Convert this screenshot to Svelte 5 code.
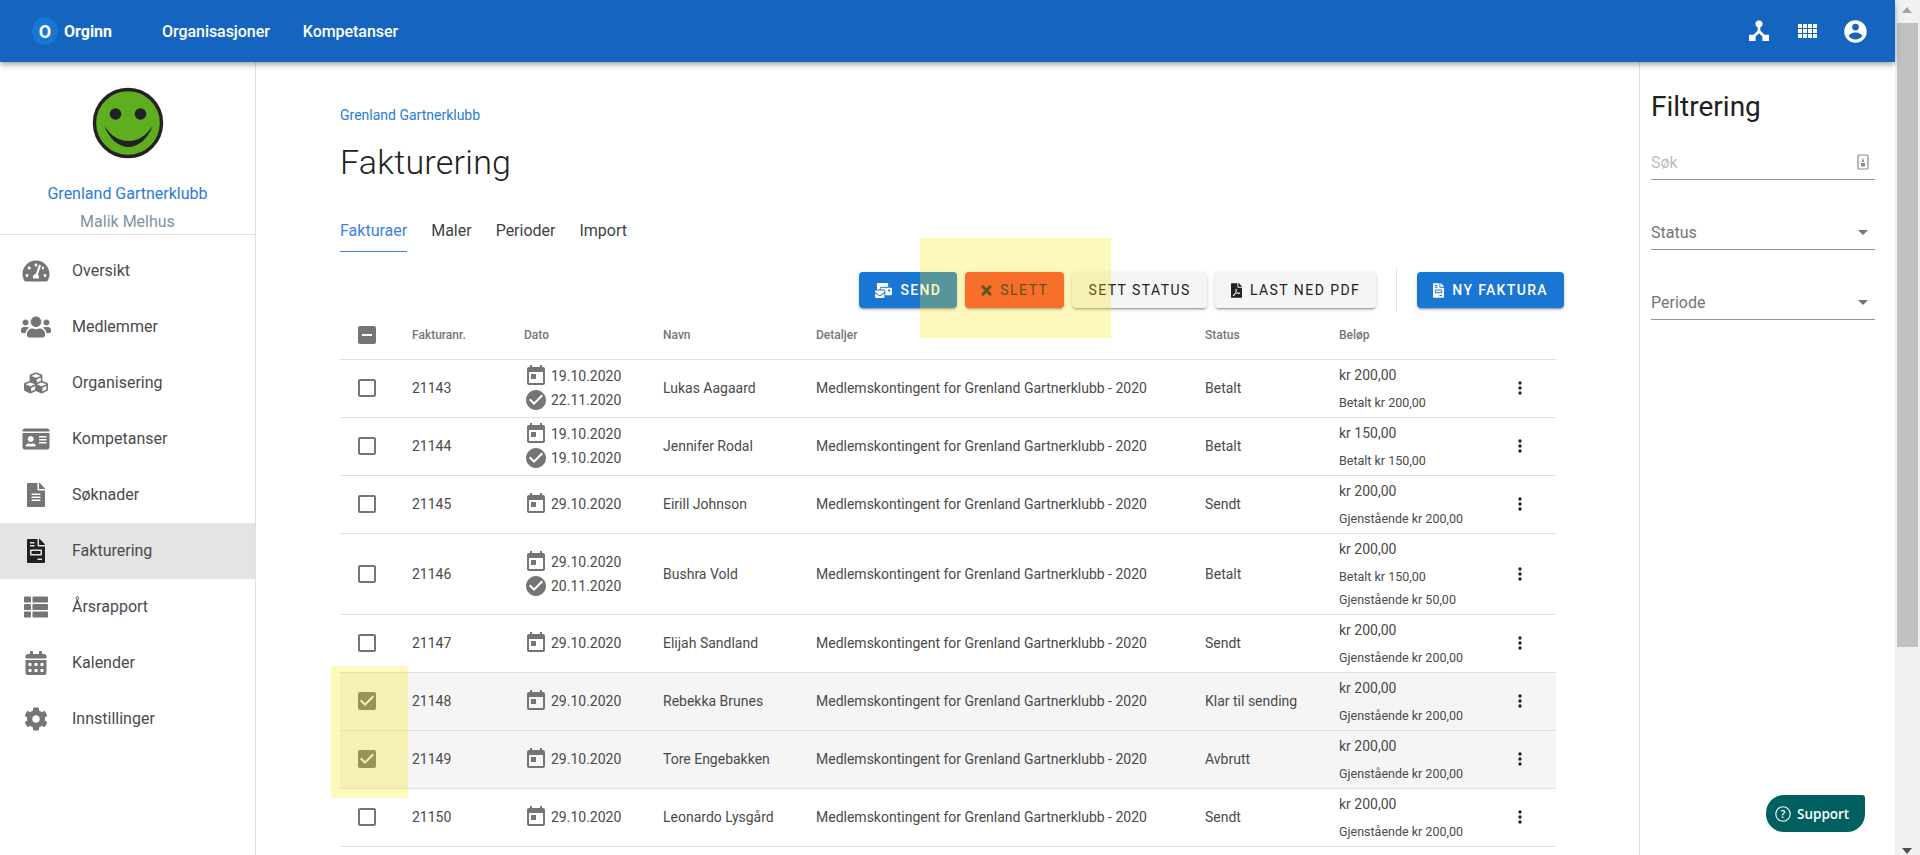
<script>
  const P = {
    gauge: ['0 0 576 512', 'M288 32C128.94 32 0 160.94 0 320c0 52.8 14.25 102.26 39.06 144.8 5.61 9.62 16.3 15.2 27.44 15.2h443c11.14 0 21.83-5.58 27.44-15.2C561.75 422.26 576 372.8 576 320c0-159.06-128.94-288-288-288zm0 64c14.71 0 26.58 10.13 30.32 23.65-1.11 2.26-2.64 4.23-3.45 6.67l-9.22 27.67c-5.13 3.49-10.97 6.01-17.64 6.01-17.67 0-32-14.33-32-32S270.33 96 288 96zM96 384c-17.67 0-32-14.33-32-32s14.33-32 32-32 32 14.33 32 32-14.33 32-32 32zm48-160c-17.67 0-32-14.33-32-32s14.33-32 32-32 32 14.33 32 32-14.33 32-32 32zm246.77-72.41l-61.33 184C343.13 347.33 352 364.54 352 384c0 11.72-3.38 22.55-8.88 32H232.88c-5.5-9.45-8.88-20.28-8.88-32 0-33.94 26.5-61.43 59.9-63.59l61.34-184.01c4.17-12.56 17.73-19.45 30.36-15.17 12.57 4.19 19.35 17.77 15.17 30.36zm14.66 57.2l15.52-46.55c3.47-1.29 7.13-2.23 11.05-2.23 17.67 0 32 14.33 32 32s-14.33 32-32 32c-11.38-.01-20.89-6.28-26.57-15.22zM480 384c-17.67 0-32-14.33-32-32s14.33-32 32-32 32 14.33 32 32-14.33 32-32 32z'],
    users: ['0 0 640 512', 'M96 224c35.3 0 64-28.7 64-64s-28.7-64-64-64-64 28.7-64 64 28.7 64 64 64zm448 0c35.3 0 64-28.7 64-64s-28.7-64-64-64-64 28.7-64 64 28.7 64 64 64zm32 32h-64c-17.6 0-33.5 7.1-45.1 18.6 40.3 22.1 68.9 62 75.1 109.4h66c17.7 0 32-14.3 32-32v-32c0-35.3-28.7-64-64-64zm-256 0c61.9 0 112-50.1 112-112S381.9 32 320 32 208 82.1 208 144s50.1 112 112 112zm76.8 32h-8.3c-20.8 10-43.9 16-68.5 16s-47.6-6-68.5-16h-8.3C179.6 288 128 339.6 128 403.2V432c0 26.5 21.5 48 48 48h288c26.5 0 48-21.5 48-48v-28.8c0-63.6-51.6-115.2-115.2-115.2zm-223.7-13.4C161.5 263.1 145.6 256 128 256H64c-35.3 0-64 28.7-64 64v32c0 17.7 14.3 32 32 32h65.9c6.3-47.4 34.9-87.3 75.2-109.4z'],
    cubes: ['0 0 512 512', 'M488.6 250.2L392 214V105.5c0-15-9.3-28.4-23.4-33.7l-100-37.5c-8.1-3.1-17.1-3.1-25.3 0l-100 37.5c-14.1 5.3-23.4 18.7-23.4 33.7V214l-96.6 36.2C9.3 255.5 0 268.9 0 283.9V394c0 13.6 7.7 26.1 19.9 32.2l100 50c10.1 5.1 22.1 5.1 32.2 0l103.9-52 103.9 52c10.1 5.1 22.1 5.1 32.2 0l100-50c12.2-6.1 19.9-18.6 19.9-32.2V283.9c0-15-9.3-28.4-23.4-33.7zM358 214.8l-85 31.9v-68.2l85-37v73.3zM154 104.1l102-38.2 102 38.2v.6l-102 41.4-102-41.4v-.6zm84 291.1l-85 42.5v-79.1l85-38.8v75.4zm0-112l-102 41.4-102-41.4v-.6l102-38.2 102 38.2v.6zm240 112l-85 42.5v-79.1l85-38.8v75.4zm0-112l-102 41.4-102-41.4v-.6l102-38.2 102 38.2v.6z'],
    idcard: ['0 0 576 512', 'M528 32H48C21.5 32 0 53.5 0 80v16h576V80c0-26.5-21.5-48-48-48zM0 432c0 26.5 21.5 48 48 48h480c26.5 0 48-21.5 48-48V128H0v304zm352-232c0-4.4 3.6-8 8-8h144c4.4 0 8 3.6 8 8v16c0 4.4-3.6 8-8 8H360c-4.4 0-8-3.6-8-8v-16zm0 64c0-4.4 3.6-8 8-8h144c4.4 0 8 3.6 8 8v16c0 4.4-3.6 8-8 8H360c-4.4 0-8-3.6-8-8v-16zm0 64c0-4.4 3.6-8 8-8h144c4.4 0 8 3.6 8 8v16c0 4.4-3.6 8-8 8H360c-4.4 0-8-3.6-8-8v-16zM176 192c35.3 0 64 28.7 64 64s-28.7 64-64 64-64-28.7-64-64 28.7-64 64-64zM67.1 396.2C75.5 370.5 99.6 352 128 352h8.2c12.3 5.1 25.7 8 39.8 8s27.6-2.9 39.8-8h8.2c28.4 0 52.5 18.5 60.9 44.2 3.2 9.9-5.2 19.8-15.6 19.8H82.7c-10.4 0-18.8-10-15.6-19.8z'],
    filealt: ['0 0 384 512', 'M224 136V0H24C10.7 0 0 10.7 0 24v464c0 13.3 10.7 24 24 24h336c13.3 0 24-10.7 24-24V160H248c-13.2 0-24-10.8-24-24zm64 236c0 6.6-5.4 12-12 12H108c-6.6 0-12-5.4-12-12v-8c0-6.6 5.4-12 12-12h168c6.6 0 12 5.4 12 12v8zm0-64c0 6.6-5.4 12-12 12H108c-6.6 0-12-5.4-12-12v-8c0-6.6 5.4-12 12-12h168c6.6 0 12 5.4 12 12v8zm0-72v8c0 6.6-5.4 12-12 12H108c-6.6 0-12-5.4-12-12v-8c0-6.6 5.4-12 12-12h168c6.6 0 12 5.4 12 12zm96-114.1v6.1H256V0h6.1c6.4 0 12.5 2.5 17 7l97.9 98c4.5 4.5 7 10.6 7 16.9z'],
    invoice: ['0 0 384 512', 'M288 256H96v64h192v-64zm89-151L279.1 7c-4.5-4.5-10.6-7-17-7H256v128h128v-6.1c0-6.3-2.5-12.4-7-16.9zm-153 31V0H24C10.7 0 0 10.7 0 24v464c0 13.3 10.7 24 24 24h336c13.3 0 24-10.7 24-24V160H248c-13.2 0-24-10.8-24-24zM64 72c0-4.42 3.58-8 8-8h80c4.42 0 8 3.58 8 8v16c0 4.42-3.58 8-8 8H72c-4.42 0-8-3.58-8-8V72zm0 64c0-4.42 3.58-8 8-8h80c4.42 0 8 3.58 8 8v16c0 4.42-3.58 8-8 8H72c-4.42 0-8-3.58-8-8v-16zm256 304c0 4.42-3.58 8-8 8h-80c-4.42 0-8-3.58-8-8v-16c0-4.42 3.58-8 8-8h80c4.42 0 8 3.58 8 8v16zm0-200v96c0 8.84-7.16 16-16 16H80c-8.84 0-16-7.16-16-16v-96c0-8.84 7.16-16 16-16h224c8.84 0 16 7.16 16 16z'],
    thlist: ['0 0 512 512', 'M149.333 216v80c0 13.255-10.745 24-24 24H24c-13.255 0-24-10.745-24-24v-80c0-13.255 10.745-24 24-24h101.333c13.255 0 24 10.745 24 24zM0 376v80c0 13.255 10.745 24 24 24h101.333c13.255 0 24-10.745 24-24v-80c0-13.255-10.745-24-24-24H24c-13.255 0-24 10.745-24 24zM125.333 32H24C10.745 32 0 42.745 0 56v80c0 13.255 10.745 24 24 24h101.333c13.255 0 24-10.745 24-24V56c0-13.255-10.745-24-24-24zm80 448H488c13.255 0 24-10.745 24-24v-80c0-13.255-10.745-24-24-24H205.333c-13.255 0-24 10.745-24 24v80c0 13.255 10.745 24 24 24zm-24-424v80c0 13.255 10.745 24 24 24H488c13.255 0 24-10.745 24-24V56c0-13.255-10.745-24-24-24H205.333c-13.255 0-24 10.745-24 24zm24 264H488c13.255 0 24-10.745 24-24v-80c0-13.255-10.745-24-24-24H205.333c-13.255 0-24 10.745-24 24v80c0 13.255 10.745 24 24 24z'],
    calalt: ['0 0 448 512', 'M0 464c0 26.5 21.5 48 48 48h352c26.5 0 48-21.5 48-48V192H0v272zm320-196c0-6.6 5.4-12 12-12h40c6.6 0 12 5.4 12 12v40c0 6.6-5.4 12-12 12h-40c-6.6 0-12-5.4-12-12v-40zm0 128c0-6.6 5.4-12 12-12h40c6.6 0 12 5.4 12 12v40c0 6.6-5.4 12-12 12h-40c-6.6 0-12-5.4-12-12v-40zM192 268c0-6.6 5.4-12 12-12h40c6.6 0 12 5.4 12 12v40c0 6.6-5.4 12-12 12h-40c-6.6 0-12-5.4-12-12v-40zm0 128c0-6.6 5.4-12 12-12h40c6.6 0 12 5.4 12 12v40c0 6.6-5.4 12-12 12h-40c-6.6 0-12-5.4-12-12v-40zM64 268c0-6.6 5.4-12 12-12h40c6.6 0 12 5.4 12 12v40c0 6.6-5.4 12-12 12H76c-6.6 0-12-5.4-12-12v-40zm0 128c0-6.6 5.4-12 12-12h40c6.6 0 12 5.4 12 12v40c0 6.6-5.4 12-12 12H76c-6.6 0-12-5.4-12-12v-40zM400 64h-48V16c0-8.8-7.2-16-16-16h-32c-8.8 0-16 7.2-16 16v48H160V16c0-8.8-7.2-16-16-16h-32c-8.8 0-16 7.2-16 16v48H48C21.5 64 0 85.5 0 112v48h448v-48c0-26.5-21.5-48-48-48z'],
    cog: ['0 0 512 512', 'M487.4 315.7l-42.6-24.6c4.3-23.2 4.3-47 0-70.2l42.6-24.6c4.9-2.8 7.1-8.6 5.5-14-11.1-35.6-30-67.8-54.7-94.6-3.8-4.1-10-5.1-14.8-2.3L380.8 110c-17.9-15.4-38.5-27.3-60.8-35.1V25.8c0-5.6-3.9-10.5-9.4-11.7-36.7-8.2-74.3-7.8-109.2 0-5.5 1.2-9.4 6.1-9.4 11.7V75c-22.2 7.9-42.8 19.8-60.8 35.1L88.7 85.5c-4.9-2.8-11-1.9-14.8 2.3-24.7 26.7-43.6 58.9-54.7 94.6-1.7 5.4.6 11.2 5.5 14L67.3 221c-4.3 23.2-4.3 47 0 70.2l-42.6 24.6c-4.9 2.8-7.1 8.6-5.5 14 11.1 35.6 30 67.8 54.7 94.6 3.8 4.1 10 5.1 14.8 2.3l42.6-24.6c17.9 15.4 38.5 27.3 60.8 35.1v49.2c0 5.6 3.9 10.5 9.4 11.7 36.7 8.2 74.3 7.8 109.2 0 5.5-1.2 9.4-6.1 9.4-11.7v-49.2c22.2-7.9 42.8-19.8 60.8-35.1l42.6 24.6c4.9 2.8 11 1.9 14.8-2.3 24.7-26.7 43.6-58.9 54.7-94.6 1.5-5.5-.7-11.3-5.6-14.1zM256 336c-44.1 0-80-35.9-80-80s35.9-80 80-80 80 35.9 80 80-35.9 80-80 80z'],
    mail: ['0 0 576 512', 'M160 448c-25.6 0-51.2-22.4-64-32-64-44.8-83.2-60.8-96-70.4V480c0 17.67 14.33 32 32 32h256c17.67 0 32-14.33 32-32V345.6c-12.8 9.6-32 25.6-96 70.4-12.8 9.6-38.4 32-64 32zm128-192H32c-17.67 0-32 14.33-32 32v16c25.6 19.2 22.4 19.2 115.2 86.4 9.6 6.4 28.8 25.6 44.8 25.6s35.2-19.2 44.8-22.4c92.8-67.2 89.6-67.2 115.2-86.4V288c0-17.67-14.33-32-32-32zm256-96H224c-17.67 0-32 14.33-32 32v32h96c33.21 0 60.59 25.42 63.71 57.82l.29-.22V416h192c17.67 0 32-14.33 32-32V192c0-17.67-14.33-32-32-32zm-32 128h-64v-64h64v64zm-352-96c0-35.29 28.71-64 64-64h224V32c0-17.67-14.33-32-32-32H96C78.33 0 64 14.33 64 32v192h96v-32z'],
    pdf: ['0 0 384 512', 'M181.9 256.1c-5-16-4.9-46.9-2-46.9 8.4 0 7.6 36.9 2 46.9zm-1.7 47.2c-7.7 20.2-17.3 43.3-28.4 62.7 18.3-7 39-17.2 62.9-21.9-12.7-9.6-24.9-23.4-34.5-40.8zM86.1 428.1c0 .8 13.2-5.4 34.9-40.2-6.7 6.3-29.1 24.5-34.9 40.2zM248 160h136v328c0 13.3-10.7 24-24 24H24c-13.3 0-24-10.7-24-24V24C0 10.7 10.7 0 24 0h200v136c0 13.2 10.8 24 24 24zm-8 171.8c-20-12.2-33.3-29-42.7-53.8 4.5-18.5 11.6-46.6 6.2-64.2-4.7-29.4-42.4-26.5-47.8-6.8-5 18.3-.4 44.1 8.1 77-11.6 27.6-28.7 64.6-40.8 85.8-.1 0-.1.1-.2.1-27.1 13.9-73.6 44.5-54.5 68 5.6 6.9 16 10 21.5 10 17.9 0 35.7-18 61.1-61.8 25.8-8.5 54.1-19.1 79-23.2 21.7 11.8 47.1 19.5 64 19.5 29.2 0 31.2-32 19.7-43.4-13.9-13.6-54.3-9.7-73.6-7.2zM377 105L279 7c-4.5-4.5-10.6-7-17-7h-6v128h128v-6.1c0-6.3-2.5-12.4-7-16.9zm-74.1 255.3c4.1-2.7-2.5-11.9-42.8-9 37.1 15.8 42.8 9 42.8 9z'],
    times: ['0 0 352 512', 'M242.72 256l100.07-100.07c12.28-12.28 12.28-32.19 0-44.48l-22.24-22.24c-12.28-12.28-32.19-12.28-44.48 0L176 189.28 75.93 89.21c-12.28-12.28-32.19-12.28-44.48 0L9.21 111.45c-12.28 12.28-12.28 32.19 0 44.48L109.28 256 9.21 356.07c-12.28 12.28-12.28 32.19 0 44.48l22.24 22.24c12.28 12.28 32.2 12.28 44.48 0L176 322.72l100.07 100.07c12.28 12.28 32.2 12.28 44.48 0l22.24-22.24c12.28-12.28 12.28-32.19 0-44.48L242.72 256z'],
    blank: ['0 0 24 24', 'M19,3H5C3.89,3 3,3.89 3,5V19A2,2 0 0,0 5,21H19A2,2 0 0,0 21,19V5C21,3.89 20.1,3 19,3M19,5V19H5V5H19Z'],
    marked: ['0 0 24 24', 'M10,17L5,12L6.41,10.58L10,14.17L17.59,6.58L19,8M19,3H5C3.89,3 3,3.89 3,5V19A2,2 0 0,0 5,21H19A2,2 0 0,0 21,19V5C21,3.89 20.1,3 19,3Z'],
    minus: ['0 0 24 24', 'M17,13H7V11H17M19,3H5C3.89,3 3,3.89 3,5V19A2,2 0 0,0 5,21H19A2,2 0 0,0 21,19V5C21,3.89 20.1,3 19,3Z'],
    today: ['0 0 24 24', 'M7,10H12V15H7M19,19H5V8H19M19,3H18V1H16V3H8V1H6V3H5C3.89,3 3,3.9 3,5V19A2,2 0 0,0 5,21H19A2,2 0 0,0 21,19V5A2,2 0 0,0 19,3Z'],
    check: ['0 0 24 24', 'M12 2C6.5 2 2 6.5 2 12S6.5 22 12 22 22 17.5 22 12 17.5 2 12 2M10 17L5 12L6.41 10.59L10 14.17L17.59 6.58L19 8L10 17Z'],
    dots: ['0 0 24 24', 'M12,16A2,2 0 0,1 14,18A2,2 0 0,1 12,20A2,2 0 0,1 10,18A2,2 0 0,1 12,16M12,10A2,2 0 0,1 14,12A2,2 0 0,1 12,14A2,2 0 0,1 10,12A2,2 0 0,1 12,10M12,4A2,2 0 0,1 14,6A2,2 0 0,1 12,8A2,2 0 0,1 10,6A2,2 0 0,1 12,4Z'],
    comfy: ['0 0 24 24', 'M3,9H7V5H3V9M3,14H7V10H3V14M8,14H12V10H8V14M13,14H17V10H13V14M8,9H12V5H8V9M13,5V9H17V5H13M18,14H22V10H18V14M3,19H7V15H3V19M8,19H12V15H8V19M13,19H17V15H13V19M18,19H22V15H18V19M18,5V9H22V5H18Z'],
    account: ['0 0 24 24', 'M12,19.2C9.5,19.2 7.29,17.92 6,16C6.03,14 10,12.9 12,12.9C14,12.9 17.97,14 18,16C16.71,17.92 14.5,19.2 12,19.2M12,5A3,3 0 0,1 15,8A3,3 0 0,1 12,11A3,3 0 0,1 9,8A3,3 0 0,1 12,5M12,2A10,10 0 0,0 2,12A10,10 0 0,0 12,22A10,10 0 0,0 22,12C22,6.47 17.5,2 12,2Z'],
    caret: ['0 0 24 24', 'M7,10L12,15L17,10H7Z'],
    hub: ['0 0 24 24', 'M12 1.5A3.6 3.6 0 0 0 8.4 5.1 3.6 3.6 0 0 0 10.7 8.5V11.6L6.6 15.7H2V22H8.6V17.6L12 14.2 15.4 17.6V22H22V15.7H17.4L13.3 11.6V8.5A3.6 3.6 0 0 0 15.6 5.1 3.6 3.6 0 0 0 12 1.5Z']
  };

  const menu = [
    ['gauge', 'Oversikt'], ['users', 'Medlemmer'], ['cubes', 'Organisering'], ['idcard', 'Kompetanser'],
    ['filealt', 'Søknader'], ['invoice', 'Fakturering'], ['thlist', 'Årsrapport'], ['calalt', 'Kalender'], ['cog', 'Innstillinger']
  ];

  const detail = 'Medlemskontingent for Grenland Gartnerklubb - 2020';
  const rows = [
    { nr: 21143, d: '19.10.2020', p: '22.11.2020', n: 'Lukas Aagaard', s: 'Betalt', a: 'kr 200,00', sub: ['Betalt kr 200,00'] },
    { nr: 21144, d: '19.10.2020', p: '19.10.2020', n: 'Jennifer Rodal', s: 'Betalt', a: 'kr 150,00', sub: ['Betalt kr 150,00'] },
    { nr: 21145, d: '29.10.2020', n: 'Eirill Johnson', s: 'Sendt', a: 'kr 200,00', sub: ['Gjenstående kr 200,00'] },
    { nr: 21146, d: '29.10.2020', p: '20.11.2020', n: 'Bushra Vold', s: 'Betalt', a: 'kr 200,00', sub: ['Betalt kr 150,00', 'Gjenstående kr 50,00'] },
    { nr: 21147, d: '29.10.2020', n: 'Elijah Sandland', s: 'Sendt', a: 'kr 200,00', sub: ['Gjenstående kr 200,00'] },
    { nr: 21148, d: '29.10.2020', n: 'Rebekka Brunes', s: 'Klar til sending', a: 'kr 200,00', sub: ['Gjenstående kr 200,00'], sel: true },
    { nr: 21149, d: '29.10.2020', n: 'Tore Engebakken', s: 'Avbrutt', a: 'kr 200,00', sub: ['Gjenstående kr 200,00'], sel: true },
    { nr: 21150, d: '29.10.2020', n: 'Leonardo Lysgård', s: 'Sendt', a: 'kr 200,00', sub: ['Gjenstående kr 200,00'] }
  ];
</script>

{#snippet icon(name, cls)}
  <svg class={cls} viewBox={P[name][0]} aria-hidden="true"><path fill="currentColor" d={P[name][1]} /></svg>
{/snippet}

<div class="root">
  <div class="page">
    <header class="bar">
      <div class="logo"><span class="mark">O</span><span class="brand">Orginn</span></div>
      <nav class="topnav"><span>Organisasjoner</span><span>Kompetanser</span></nav>
      <div class="baricons">
        {@render icon('hub', 'bi-hub')}
        {@render icon('comfy', 'bi-apps')}
        {@render icon('account', 'bi-acc')}
      </div>
    </header>

    <div class="body">
      <aside class="side">
        <div class="profile">
          <svg class="smile" viewBox="0 0 72 72" aria-hidden="true">
            <circle cx="36" cy="36" r="33.5" fill="#5fae20" stroke="#222226" stroke-width="3.4" />
            <circle cx="23.5" cy="27" r="5.8" fill="#222226" />
            <circle cx="48.5" cy="27" r="5.8" fill="#222226" />
            <path d="M12.5 39C17 52 27 60 36.5 60S56 52 60.5 39C54 49 46 54 36.5 54S19 49 12.5 39Z" fill="#222226" />
          </svg>
          <div class="club">Grenland Gartnerklubb</div>
          <div class="user">Malik Melhus</div>
        </div>
        <ul class="menu">
          {#each menu as [ic, label]}
            <li class:active={label === 'Fakturering'}>
              <span class="mi">{@render icon(ic, 'mi-svg')}</span>
              <span>{label}</span>
            </li>
          {/each}
        </ul>
      </aside>

      <main class="main">
        <div class="crumb">Grenland Gartnerklubb</div>
        <h1>Fakturering</h1>
        <div class="tabs">
          <span class="tab on">Fakturaer</span>
          <span class="tab">Maler</span>
          <span class="tab">Perioder</span>
          <span class="tab">Import</span>
        </div>
        <div class="toolbar">
          <button class="btn blue">{@render icon('mail', 'bic wide')}Send</button>
          <button class="btn red">{@render icon('times', 'bic x')}Slett</button>
          <button class="btn grey">Sett status</button>
          <button class="btn grey">{@render icon('pdf', 'bic')}Last ned PDF</button>
          <span class="vsep"></span>
          <button class="btn blue">{@render icon('invoice', 'bic')}Ny faktura</button>
        </div>

        <div class="table">
          <div class="row head">
            <span class="cb">{@render icon('minus', 'cbi')}</span>
            <span>Fakturanr.</span><span>Dato</span><span>Navn</span><span>Detaljer</span><span>Status</span><span>Beløp</span><span></span>
          </div>
          {#each rows as r}
            <div class="row item" class:sel={r.sel}>
              <span class="cb">{@render icon(r.sel ? 'marked' : 'blank', 'cbi')}</span>
              <span>{r.nr}</span>
              <div class="dates">
                <div class="dl">{@render icon('today', 'di')}<span>{r.d}</span></div>
                {#if r.p}<div class="dl">{@render icon('check', 'di')}<span>{r.p}</span></div>{/if}
              </div>
              <span>{r.n}</span>
              <span>{detail}</span>
              <span>{r.s}</span>
              <div class="amt">
                <div class="kr">{r.a}</div>
                {#each r.sub as s}<div class="sub">{s}</div>{/each}
              </div>
              <span class="more">{@render icon('dots', 'dot')}</span>
            </div>
          {/each}
        </div>
      </main>

      <aside class="filter">
        <h2>Filtrering</h2>
        <div class="field first">
          <span class="ph">Søk</span>
          <svg class="sok" viewBox="0 0 12 16" aria-hidden="true">
            <rect x="1" y="1" width="10" height="14" rx="1" fill="none" stroke="#8a8a8a" stroke-width="1.2" />
            <path d="M6 3.4 7.2 8H4.8Z M4 9h4v3.6H4Z" fill="#8a8a8a" />
          </svg>
        </div>
        <div class="field"><span>Status</span>{@render icon('caret', 'car')}</div>
        <div class="field"><span>Periode</span>{@render icon('caret', 'car')}</div>
      </aside>
    </div>
  </div>

  <div class="scroll">
    <span class="up"></span>
    <span class="thumb"></span>
    <span class="down"></span>
  </div>

  <div class="mark-a"></div>
  <div class="mark-b"></div>

  <div class="support">
    <svg viewBox="0 0 16 16" aria-hidden="true"><circle cx="8" cy="8" r="7.2" fill="none" stroke="#fff" stroke-width="1.1" /><text x="8" y="11.6" text-anchor="middle" fill="#fff" font-size="10.5" font-family="Open Sans, sans-serif">?</text></svg>
    <span>Support</span>
  </div>
</div>

<style>
  :global(body) { margin: 0; background: #fff; }
  .root { position: relative; display: flex; width: 1920px; height: 855px; overflow: hidden; font-family: Roboto, sans-serif; color: #424242; font-size: 14px; }
  .page { flex: 1; min-width: 0; display: flex; flex-direction: column; }

  .bar { position: relative; z-index: 2; flex: none; height: 62px; background: #1565c0; color: #fff; display: flex; align-items: center; box-shadow: 0 2px 4px -1px rgba(0,0,0,.2), 0 4px 5px 0 rgba(0,0,0,.14), 0 1px 10px 0 rgba(0,0,0,.12); }
  .logo { display: flex; align-items: center; margin-left: 32px; width: 130px; }
  .mark { width: 26px; height: 28px; border-radius: 50%; background: #1976d2; font-size: 18px; font-weight: 700; display: flex; align-items: center; justify-content: center; }
  .brand { margin-left: 6px; font-size: 16px; font-weight: 700; }
  .topnav { display: flex; gap: 33px; font-size: 16px; font-weight: 500; letter-spacing: -.05px; }
  .baricons { margin-left: auto; display: flex; align-items: center; margin-right: 26px; }
  .bi-hub { width: 24px; height: 24px; margin-right: 24px; }
  .bi-apps { width: 24px; height: 24px; margin-right: 23px; }
  .bi-acc { width: 27px; height: 27px; }

  .body { flex: 1; min-height: 0; display: flex; }
  .side { flex: none; width: 255px; border-right: 1px solid #e0e0e0; }
  .profile { height: 173px; box-sizing: border-box; border-bottom: 1px solid #e0e0e0; text-align: center; padding-top: 25px; }
  .smile { display: block; width: 72px; height: 72px; margin: 0 auto 25px; }
  .club { color: #2b7bd6; font-size: 16px; line-height: 20px; }
  .user { color: #8093a0; font-size: 16px; line-height: 20px; margin-top: 8px; }
  .menu { list-style: none; margin: 0; padding: 8px 0 0; }
  .menu li { height: 56px; box-sizing: border-box; padding-bottom: 1px; display: flex; align-items: center; font-size: 16px; color: #4a4a4a; font-weight: 400; }
  .menu li.active { background: #e4e4e4; }
  .mi { width: 72px; flex: none; display: flex; justify-content: center; color: #757575; }
  .menu li.active .mi { color: #212121; }
  .mi-svg { height: 24px; width: 32px; display: block; }

  .main { flex: 1; min-width: 0; padding: 43px 83px 0 84px; }
  .crumb { font-size: 14px; line-height: 20px; color: #2b7bd6; }
  h1 { margin: 17px 0 0; font-size: 34px; line-height: 40px; font-weight: 300; color: #212121; letter-spacing: .25px; }
  .tabs { display: flex; gap: 24px; margin-top: 28px; font-size: 16px; line-height: 20px; color: #424242; }
  .tab { padding: 11px 0 10px; border-bottom: 1px solid transparent; }
  .tab.on { color: #3b82e6; border-bottom-color: #3b82e6; }
  .toolbar { display: flex; align-items: center; justify-content: flex-end; gap: 8px; height: 44px; margin: 16px -8px 0 0; }
  .btn { height: 36px; padding: 0 16px; border: 0; border-radius: 4px; display: inline-flex; align-items: center; font: 500 14px Roboto, sans-serif; letter-spacing: 1.35px; text-transform: uppercase; box-shadow: 0 3px 1px -2px rgba(0,0,0,.2), 0 2px 2px 0 rgba(0,0,0,.14), 0 1px 5px 0 rgba(0,0,0,.12); }
  .blue { background: #1976d2; color: #fff; }
  .red { background: #f44336; color: #212121; font-weight: 400; letter-spacing: 1.45px; }
  .grey { background: #f5f5f5; color: #212121; font-weight: 400; letter-spacing: 1.45px; }
  .bic { height: 15px; width: 11px; margin-right: 8px; flex: none; }
  .bic.wide { width: 17px; margin-right: 9px; }
  .bic.x { width: 11px; margin-right: 8px; }
  .vsep { width: 1px; height: 44px; background: #e0e0e0; margin: 0 12px; }

  .table { width: 1216px; }
  .row { display: grid; grid-template-columns: 72px 112px 139px 153px 389px 134px 166px 1fr; align-items: center; border-bottom: 1px solid #e0e0e0; }
  .head { height: 45px; padding-bottom: 2px; font-size: 12px; font-weight: 500; color: #757575; }
  .item { color: #4a4a4a; padding-bottom: 1px; }
  .item.sel { background: #f5f5f5; }
  .cb { padding-left: 15px; display: flex; color: #757575; }
  .cbi { width: 24px; height: 24px; }
  .dl { display: flex; align-items: center; height: 24px; gap: 3px; }
  .di { width: 24px; height: 24px; color: #757575; }
  .amt { padding: 5px 0 0; }
  .kr { line-height: 20px; }
  .sub { line-height: 20px; font-size: 12.5px; margin-bottom: 3px; }
  .kr + .sub { margin-top: 8px; }
  .more { display: flex; color: #212121; margin-left: 5px; }
  .dot { width: 20px; height: 20px; }

  .filter { flex: none; width: 256px; box-sizing: border-box; border-left: 1px solid #e0e0e0; padding: 0 20px 0 11px; }
  h2 { margin: 28px 0 0; font-size: 28px; line-height: 34px; font-weight: 400; color: #212121; }
  .field { height: 44px; margin-top: 26px; box-sizing: border-box; border-bottom: 1px solid #949494; display: flex; align-items: center; justify-content: space-between; font-size: 16px; color: #757575; padding-top: 9px; }
  .field.first { margin-top: 12px; }
  .ph { color: #bdbdbd; }
  .sok { width: 12px; height: 16px; margin-right: 6px; }
  .car { width: 24px; height: 24px; margin-right: 0; }

  .scroll { flex: none; width: 25px; background: #f1f1f1; position: relative; }
  .up { position: absolute; left: 7px; top: 7px; border: 5.5px solid transparent; border-top: 0; border-bottom: 6px solid #a3a3a3; }
  .thumb { position: absolute; left: 2px; top: 23px; width: 21px; height: 624px; background: #c1c1c1; }
  .down { position: absolute; left: 7px; bottom: 1px; border: 5.5px solid transparent; border-bottom: 0; border-top: 6px solid #505050; }

  .mark-a, .mark-b { position: absolute; background: rgba(255,229,10,.27); z-index: 3; pointer-events: none; }
  .mark-a { left: 920px; top: 238px; width: 191px; height: 100px; }
  .mark-b { left: 331px; top: 666px; width: 77px; height: 132px; }

  .support { position: absolute; z-index: 4; left: 1766px; top: 795px; width: 99px; height: 37px; box-sizing: border-box; background: #005f61; color: #fff; border-radius: 18px 3px 18px 18px; display: flex; align-items: center; padding-left: 9px; gap: 6px; font: 600 13.5px "Open Sans", sans-serif; }
  .support svg { width: 16px; height: 16px; }
</style>
